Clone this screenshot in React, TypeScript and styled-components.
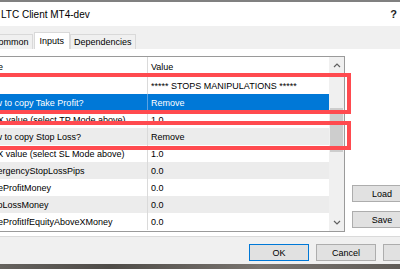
import React from 'react';
import styled, { createGlobalStyle } from 'styled-components';

const Global = createGlobalStyle`
  html, body { margin: 0; padding: 0; background: #f0f0f0; overflow: hidden; }
  body { width: 400px; height: 269px; font-family: "Liberation Sans", Arial, sans-serif; color: #000; }
  * { box-sizing: border-box; }
`;

const Window = styled.div`
  position: relative;
  margin-left: -40px;
  width: 500px;
  height: 269px;
  display: flex;
  flex-direction: column;
  background: #f0f0f0;
  overflow: hidden;
`;

const TopEdge = styled.div`
  height: 2px;
  background: #808080;
  flex: 0 0 auto;
`;

const TitleBar = styled.div`
  height: 24px;
  flex: 0 0 auto;
  background: #fff;
  display: flex;
  align-items: center;
  justify-content: space-between;
  padding: 0 63px 0 41px;
  font-size: 10px;
`;

const Help = styled.span`
  font-size: 11px;
  font-weight: bold;
  color: #222;
`;

const TabStrip = styled.div`
  height: 23px;
  flex: 0 0 auto;
  display: flex;
  align-items: flex-end;
  padding-left: 28px;
  background: #f0f0f0;
`;

const Tab = styled.div<{ $active?: boolean }>`
  height: ${(p) => (p.$active ? 17 : 15)}px;
  padding: 0 ${(p) => (p.$active ? 5 : 3)}px;
  margin-right: ${(p) => (p.$active ? 0 : 1)}px;
  display: flex;
  align-items: center;
  font-size: 9px;
  border: 1px solid #d9d9d9;
  border-bottom: none;
  background: ${(p) => (p.$active ? '#fff' : '#f0f0f0')};
`;

const Panel = styled.div`
  flex: 0 0 188px;
  background: #fff;
  border-bottom: 1px solid #dadada;
  display: flex;
  align-items: flex-start;
  padding: 7px 0 0 14px;
`;

const ListBox = styled.div`
  width: 371px;
  height: 176px;
  border: 1px solid #9a9a9a;
  display: flex;
  background: #fff;
  flex: 0 0 auto;
`;

const Grid = styled.div`
  flex: 1;
  display: flex;
  flex-direction: column;
  overflow: hidden;
`;

const HeaderRow = styled.div`
  height: 20px;
  flex: 0 0 auto;
  display: grid;
  grid-template-columns: 173px 1fr;
  font-size: 9px;
  --pad: 4px;
`;

const Row = styled.div<{ $tone: 'white' | 'gray' | 'selected' }>`
  height: 17px;
  flex: 0 0 auto;
  display: grid;
  grid-template-columns: 173px 1fr;
  font-size: 9px;
  --pad: 9px;
  background: ${(p) => (p.$tone === 'selected' ? '#0078d7' : p.$tone === 'gray' ? '#ececec' : '#fff')};
  color: ${(p) => (p.$tone === 'selected' ? '#fff' : '#000')};
  --divider: ${(p) => (p.$tone === 'selected' ? '#5aa3e3' : '#dadada')};
`;

const NameCell = styled.div`
  display: flex;
  align-items: center;
  padding-left: var(--pad, 4px);
  white-space: nowrap;
  overflow: hidden;
  border-right: 1px solid var(--divider, #dadada);
`;

const ValueCell = styled.div`
  display: flex;
  align-items: center;
  padding-left: 3px;
  white-space: nowrap;
  overflow: hidden;
`;

const ScrollBar = styled.div`
  width: 15px;
  flex: 0 0 auto;
  background: #f0f0f0;
  display: flex;
  flex-direction: column;
`;

const ScrollButton = styled.div`
  height: 17px;
  display: flex;
  align-items: center;
  justify-content: center;
  flex: 0 0 auto;
`;

const Track = styled.div`
  flex: 1;
  display: flex;
  flex-direction: column;
  padding: 34px 1px 0;
`;

const Thumb = styled.div`
  height: 44px;
  background: #cdcdcd;
`;

const Side = styled.div`
  height: 176px;
  margin-left: 7px;
  display: flex;
  flex-direction: column;
  justify-content: flex-end;
  gap: 9px;
  padding-bottom: 4px;
`;

const Button = styled.div<{ $default?: boolean }>`
  width: 60px;
  height: 17px;
  display: flex;
  align-items: center;
  justify-content: center;
  font-size: 9px;
  background: #e1e1e1;
  border: 1px solid ${(p) => (p.$default ? '#0078d7' : '#adadad')};
  flex: 0 0 auto;
`;

const Footer = styled.div`
  flex: 0 0 27px;
  display: flex;
  justify-content: flex-end;
  align-items: flex-start;
  gap: 7px;
  padding: 7px 17px 0 0;
  background: #f0f0f0;
`;

const BottomEdge = styled.div`
  flex: 1;
  background: linear-gradient(90deg, #6d6a66, #4f4c48 30%, #7a7570 60%, #55524e);
`;

const Callout = styled.div<{ $top: number; $height: number }>`
  position: absolute;
  left: 20px;
  width: 371px;
  top: ${(p) => p.$top}px;
  height: ${(p) => p.$height}px;
  border: 4px solid #ff4a4f;
  pointer-events: none;
`;

const Chevron = ({ down }: { down?: boolean }) => (
  <svg width="8" height="5" viewBox="0 0 8 5">
    <path
      d={down ? 'M1 1 L4 4 L7 1' : 'M1 4 L4 1 L7 4'}
      fill="none"
      stroke="#606060"
      strokeWidth="1.2"
    />
  </svg>
);

type Item = { name: string; value: string };

const items: Item[] = [
  { name: '', value: '***** STOPS MANIPULATIONS *****' },
  { name: 'How to copy Take Profit?', value: 'Remove' },
  { name: 'TP X value (select TP Mode above)', value: '1.0' },
  { name: 'How to copy Stop Loss?', value: 'Remove' },
  { name: 'SL X value (select SL Mode above)', value: '1.0' },
  { name: 'EmergencyStopLossPips', value: '0.0' },
  { name: 'TakeProfitMoney', value: '0.0' },
  { name: 'StopLossMoney', value: '0.0' },
  { name: 'TakeProfitIfEquityAboveXMoney', value: '0.0' },
];

export default function App() {
  return (
    <>
      <Global />
      <Window>
        <TopEdge />
        <TitleBar>
          <span>LTC Client MT4-dev</span>
          <Help>?</Help>
        </TitleBar>
        <TabStrip>
          <Tab>Common</Tab>
          <Tab $active>Inputs</Tab>
          <Tab>Dependencies</Tab>
        </TabStrip>
        <Panel>
          <ListBox>
            <Grid>
              <HeaderRow>
                <NameCell>Name</NameCell>
                <ValueCell>Value</ValueCell>
              </HeaderRow>
              {items.map((it, i) => (
                <Row key={i} $tone={i === 1 ? 'selected' : i % 2 === 1 ? 'gray' : 'white'}>
                  <NameCell>{it.name}</NameCell>
                  <ValueCell>{it.value}</ValueCell>
                </Row>
              ))}
            </Grid>
            <ScrollBar>
              <ScrollButton>
                <Chevron />
              </ScrollButton>
              <Track>
                <Thumb />
              </Track>
              <ScrollButton>
                <Chevron down />
              </ScrollButton>
            </ScrollBar>
          </ListBox>
          <Side>
            <Button>Load</Button>
            <Button>Save</Button>
          </Side>
        </Panel>
        <Footer>
          <Button $default>OK</Button>
          <Button>Cancel</Button>
          <Button>Reset</Button>
        </Footer>
        <BottomEdge />
        <Callout $top={73} $height={41} />
        <Callout $top={121} $height={29} />
      </Window>
    </>
  );
}
